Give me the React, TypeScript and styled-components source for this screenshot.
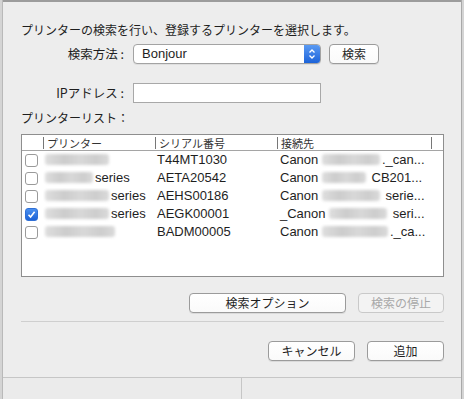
import React from "react";
import styled, { createGlobalStyle } from "styled-components";

const Global = createGlobalStyle`
  html, body { margin: 0; padding: 0; background: #d6d6d6; }
  body { font-family: "Liberation Sans", "Noto Sans CJK JP", sans-serif; color: #1e1e1e; }
  * { box-sizing: border-box; }
`;

const Frame = styled.div`
  width: 464px;
  height: 399px;
  display: flex;
  overflow: hidden;
`;

const SideStrip = styled.div<{ side: "l" | "r" }>`
  width: 3px;
  background: #d4d4d4;
  border-right: ${(p) => (p.side === "l" ? "1px solid #b9b9b9" : "none")};
  border-left: ${(p) => (p.side === "r" ? "1px solid #a9a9a9" : "none")};
`;

const Dialog = styled.div`
  flex: 1;
  display: flex;
  flex-direction: column;
  background: #ededed;
  border-top: 2px solid #9c9c9c;
`;

const Body = styled.div`
  flex: 1;
  padding: 20px 16px 0 18px;
  display: flex;
  flex-direction: column;
`;

const Jp = styled.span`
  font-family: "Noto Sans CJK JP", "Liberation Sans", sans-serif;
  font-size: 12px;
  line-height: 16px;
`;

const Intro = styled(Jp)`
  display: block;
`;

const FormGrid = styled.div<{ mt: number }>`
  display: grid;
  grid-template-columns: 104px 188px auto;
  column-gap: 8px;
  align-items: center;
  margin-top: ${(p) => p.mt}px;
`;

const Label = styled(Jp)`
  text-align: right;
  padding-right: 1px;
  font-size: 12.5px;
`;

const Popup = styled.div`
  height: 20px;
  border: 1px solid #a3a3a3;
  border-radius: 4px;
  background: #fff;
  display: flex;
  align-items: stretch;
  overflow: hidden;
  box-shadow: 0 1px 0 rgba(0, 0, 0, 0.06);
`;

const PopupText = styled.div`
  flex: 1;
  font-size: 13px;
  line-height: 18px;
  padding-left: 8px;
`;

const Stepper = styled.div`
  width: 16px;
  background: linear-gradient(#5a9af3, #1c63d9);
  display: flex;
  align-items: center;
  justify-content: center;
`;

const Button = styled.button<{ w: number; disabled?: boolean }>`
  width: ${(p) => p.w}px;
  height: 20px;
  padding: 0;
  border: 1px solid ${(p) => (p.disabled ? "#c9c9c9" : "#9b9b9b")};
  border-radius: 4px;
  background: ${(p) => (p.disabled ? "#f3f3f3" : "linear-gradient(#ffffff, #fafafa)")};
  color: ${(p) => (p.disabled ? "#a8a8a8" : "#1e1e1e")};
  font-family: "Noto Sans CJK JP", "Liberation Sans", sans-serif;
  font-size: 12px;
  line-height: 18px;
  box-shadow: ${(p) => (p.disabled ? "none" : "0 1px 0 rgba(0,0,0,0.08)")};
`;

const TextField = styled.div`
  height: 20px;
  border: 1px solid #a8a8a8;
  background: #fff;
`;

const ListLabel = styled(Jp)`
  display: block;
  margin-top: 7px;
`;

const ListBox = styled.div`
  margin-top: 8px;
  width: 423px;
  height: 143px;
  border: 1px solid #8e8e8e;
  background: #fff;
`;

const cols = "21px 112px 122px 154px 1fr";

const HeaderRow = styled.div`
  display: grid;
  grid-template-columns: ${cols};
  height: 16px;
  border-bottom: 1px solid #a5a5a5;
`;

const HeaderCell = styled.div<{ sep?: boolean }>`
  font-family: "Noto Sans CJK JP", "Liberation Sans", sans-serif;
  font-size: 11px;
  color: #333;
  padding-left: 3px;
  border-left: ${(p) => (p.sep ? "1px solid #777" : "none")};
  margin: 2px 0 1px;
  line-height: 12px;
`;

const Row = styled.div`
  display: grid;
  grid-template-columns: ${cols};
  height: 18px;
  align-items: center;
  font-size: 13px;
  &:first-of-type {
    margin-top: 1px;
  }
`;

const Cell = styled.div<{ pl: number }>`
  padding-left: ${(p) => p.pl}px;
  white-space: nowrap;
  overflow: hidden;
  line-height: 16px;
`;

const Box = styled.div<{ on?: boolean }>`
  width: 13px;
  height: 13px;
  margin-left: 3px;
  border-radius: 3px;
  border: 1px solid ${(p) => (p.on ? "#2f6fd6" : "#9a9a9a")};
  background: ${(p) => (p.on ? "linear-gradient(#4a90f0, #1c62d6)" : "#fff")};
  display: flex;
  align-items: center;
  justify-content: center;
`;

const Blur = styled.span<{ w: number }>`
  display: inline-block;
  width: ${(p) => p.w}px;
  height: 11px;
  vertical-align: -1px;
  background: linear-gradient(90deg, #dedede, #cccccc 30%, #d8d8d8 55%, #cdcdcd 80%, #dadada);
  filter: blur(1.8px);
  border-radius: 3px;
  margin-right: 2px;
`;

const ButtonRow = styled.div<{ mt: number }>`
  display: flex;
  justify-content: flex-end;
  gap: 12px;
  margin-top: ${(p) => p.mt}px;
  width: 423px;
`;

const Separator = styled.div`
  margin-top: 8px;
  width: 423px;
  height: 1px;
  background: #cfcfcf;
`;

const BottomBar = styled.div`
  height: 22px;
  border-top: 1px solid #c6c6c6;
  background: #ebebeb;
  display: grid;
  grid-template-columns: 238px 1fr;
`;

const BarCell = styled.div<{ sep?: boolean }>`
  border-left: ${(p) => (p.sep ? "1px solid #c6c6c6" : "none")};
`;

const rows = [
  { on: false, blur: 64, series: false, serial: "T44MT1030", pre: "Canon", cb: 58, post: "._can..." },
  { on: false, blur: 48, series: true, serial: "AETA20542", pre: "Canon", cb: 44, post: " CB201..." },
  { on: false, blur: 64, series: true, serial: "AEHS00186", pre: "Canon", cb: 58, post: " serie..." },
  { on: true, blur: 64, series: true, serial: "AEGK00001", pre: "_Canon", cb: 58, post: " seri..." },
  { on: false, blur: 70, series: false, serial: "BADM00005", pre: "Canon", cb: 66, post: "._ca..." },
];

export default function App() {
  return (
    <Frame>
      <Global />
      <SideStrip side="l" />
      <Dialog>
        <Body>
          <Intro>プリンターの検索を行い、登録するプリンターを選択します。</Intro>
          <FormGrid mt={6}>
            <Label>検索方法 :</Label>
            <Popup>
              <PopupText>Bonjour</PopupText>
              <Stepper>
                <svg width="8" height="12" viewBox="0 0 8 12">
                  <path d="M1.5 4.5 L4 2 L6.5 4.5 M1.5 7.5 L4 10 L6.5 7.5" fill="none" stroke="#fff" strokeWidth="1.3" />
                </svg>
              </Stepper>
            </Popup>
            <Button w={50}>検索</Button>
          </FormGrid>
          <FormGrid mt={19}>
            <Label>IPアドレス :</Label>
            <TextField />
            <span />
          </FormGrid>
          <ListLabel>プリンターリスト：</ListLabel>
          <ListBox>
            <HeaderRow>
              <HeaderCell />
              <HeaderCell sep>プリンター</HeaderCell>
              <HeaderCell sep>シリアル番号</HeaderCell>
              <HeaderCell sep>接続先</HeaderCell>
              <HeaderCell sep />
            </HeaderRow>
            {rows.map((r, i) => (
              <Row key={i}>
                <Box on={r.on}>
                  {r.on && (
                    <svg width="9" height="9" viewBox="0 0 9 9">
                      <path d="M1.5 4.8 L3.6 7 L7.6 1.8" fill="none" stroke="#fff" strokeWidth="1.6" />
                    </svg>
                  )}
                </Box>
                <Cell pl={2}>
                  <Blur w={r.blur} />
                  {r.series ? "series" : ""}
                </Cell>
                <Cell pl={2}>{r.serial}</Cell>
                <Cell pl={3}>
                  {r.pre} <Blur w={r.cb} />
                  {r.post}
                </Cell>
                <span />
              </Row>
            ))}
          </ListBox>
          <ButtonRow mt={16}>
            <Button w={157}>検索オプション</Button>
            <Button w={86} disabled>
              検索の停止
            </Button>
          </ButtonRow>
          <Separator />
          <ButtonRow mt={19}>
            <Button w={87}>キャンセル</Button>
            <Button w={77}>追加</Button>
          </ButtonRow>
        </Body>
        <BottomBar>
          <BarCell />
          <BarCell sep />
        </BottomBar>
      </Dialog>
      <SideStrip side="r" />
    </Frame>
  );
}
